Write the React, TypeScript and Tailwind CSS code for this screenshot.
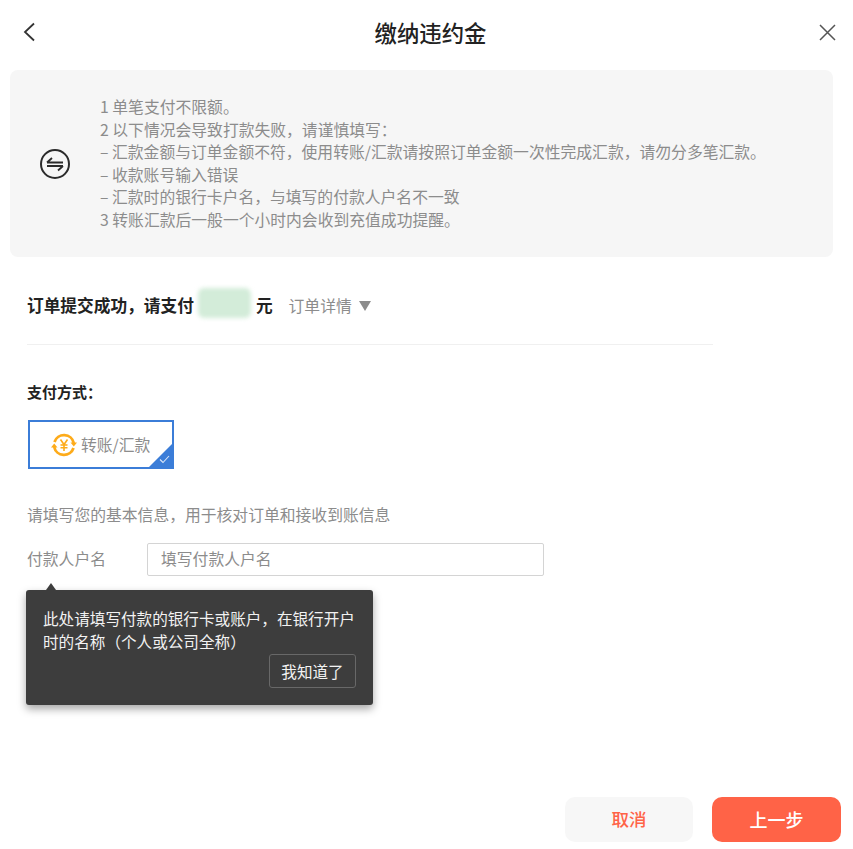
const notes = [
  '1 单笔支付不限额。',
  '2 以下情况会导致打款失败，请谨慎填写：',
  '– 汇款金额与订单金额不符，使用转账/汇款请按照订单金额一次性完成汇款，请勿分多笔汇款。',
  '– 收款账号输入错误',
  '– 汇款时的银行卡户名，与填写的付款人户名不一致',
  '3 转账汇款后一般一个小时内会收到充值成功提醒。',
];

function TransferIcon() {
  return (
    <svg width="32" height="32" viewBox="0 0 32 32" fill="none" stroke="#2b2b2b" strokeWidth="2">
      <circle cx="16" cy="16" r="14" />
      <path d="M8 14.5h16M8 14.5l5-4.5" strokeWidth="1.8" />
      <path d="M24 18H8M24 18l-5 4.5" strokeWidth="1.8" />
    </svg>
  );
}

function YuanIcon() {
  return (
    <svg width="26" height="26" viewBox="0 0 26 26" fill="none" stroke="#fdab1a" strokeWidth="2.8">
      <path d="M3.5 10A10 10 0 0 1 22.800 11" />
      <path d="M22.500 16A10 10 0 0 1 3.200 15" />
      <path d="M19.500 10.500h6.500l-3.200 4z" strokeWidth="0" fill="#fdab1a" />
      <path d="M6.500 15.500H0l3.200-4z" strokeWidth="0" fill="#fdab1a" />
      <path d="M9.500 7.500l3.500 5 3.500-5M13 12.500v6.500M9.500 13h7M9.500 15.800h7" strokeWidth="1.6" />
    </svg>
  );
}

export default function App() {
  return (
    <div
      className="flex h-[849px] flex-col overflow-hidden bg-white text-[15.8px] text-[#8c8c8c]"
      style={{ fontFamily: '"Noto Sans CJK SC", "Noto Sans", sans-serif' }}
    >
      <header className="flex h-[70px] shrink-0 items-center justify-between pb-[6px] pl-[22px] pr-[16px]">
        <svg className="mr-[7px]" width="14" height="20" viewBox="0 0 14 20" fill="none" stroke="#333" strokeWidth="1.8">
          <path d="M12 1.5L3 10l9 8.5" />
        </svg>
        <h1 className="text-[22.4px] font-medium leading-none text-[#222]">缴纳违约金</h1>
        <svg width="19" height="19" viewBox="0 0 19 19" fill="none" stroke="#555" strokeWidth="1.5">
          <path d="M2 2l15 15M17 2L2 17" />
        </svg>
      </header>

      <section className="mx-[10px] flex h-[187px] w-[823px] shrink-0 items-center rounded-[8px] bg-[#f6f6f6] pl-[29px]">
        <div className="mr-[29px] shrink-0">
          <TransferIcon />
        </div>
        <ul className="leading-[22.5px]">
          {notes.map((note) => (
            <li key={note}>{note}</li>
          ))}
        </ul>
      </section>

      <div className="ml-[27px] flex h-[88px] w-[686px] shrink-0 items-center border-b border-[#f0f0f0] pt-[11px]">
        <span className="text-[16.7px] font-bold text-[#222]">订单提交成功，请支付</span>
        <span className="mb-[6px] ml-[4px] mr-[5px] h-[30px] w-[53px] rounded-[6px] bg-[#d3ecd9] blur-[2px]" />
        <span className="text-[16.7px] font-bold text-[#222]">元</span>
        <span className="ml-[16px]">订单详情</span>
        <span className="ml-[7px] h-0 w-0 border-x-[6px] border-t-[10px] border-x-transparent border-t-[#8c8c8c]" />
      </div>

      <div className="ml-[27px] mt-[36px] text-[15px] font-bold leading-[22px] text-[#222]">支付方式：</div>

      <div className="relative ml-[28px] mt-[17px] flex h-[49px] w-[146px] shrink-0 items-center gap-[4px] border-2 border-[#3b7dd8] pl-[21px]">
        <YuanIcon />
        <span>转账/汇款</span>
        <span className="absolute bottom-0 right-0 h-0 w-0 border-b-[23px] border-l-[23px] border-b-[#3b7dd8] border-l-transparent" />
        <svg className="absolute bottom-[3px] right-[2px]" width="11" height="9" viewBox="0 0 11 9" fill="none" stroke="#dbe7f8" strokeWidth="1.1">
          <path d="M1 4.5l3 3 6-6.500" />
        </svg>
      </div>

      <p className="ml-[27px] mt-[34px] leading-[24px]">请填写您的基本信息，用于核对订单和接收到账信息</p>

      <div className="relative ml-[27px] mt-[16px] flex items-center">
        <label className="mb-[2px] w-[120px] shrink-0">付款人户名</label>
        <input
          placeholder="填写付款人户名"
          className="h-[33px] w-[397px] rounded-[2px] border border-[#d4d4d4] pb-[3px] pl-[13px] pr-[13px] outline-none placeholder:text-[#8c8c8c]"
        />
        <div className="absolute left-[-1px] top-[47px] h-[115px] w-[347px] rounded-[3px] bg-[#3d3d3d] pl-[17px] pr-[15px] pt-[17px] text-[15.6px] leading-[23px] text-[#f2f2f2] shadow-[0_4px_8px_rgba(0,0,0,0.35)]">
          <span className="absolute left-[20px] top-[-7px] h-0 w-0 border-x-[5px] border-b-[7px] border-x-transparent border-b-[#3d3d3d]" />
          <p>此处请填写付款的银行卡或账户，在银行开户时的名称（个人或公司全称）</p>
          <div className="mt-[1px] flex justify-end pr-[2px]">
            <button className="h-[34px] w-[87px] rounded-[3px] border border-[#686868] text-[#f2f2f2]">我知道了</button>
          </div>
        </div>
      </div>

      <footer className="mt-auto flex justify-end gap-[19px] pb-[7px] pr-[12px]">
        <button className="h-[45px] w-[128px] rounded-[10px] bg-[#f7f7f7] text-[17.5px] font-medium text-[#ff6347]">取消</button>
        <button className="h-[45px] w-[129px] rounded-[10px] bg-[#ff6347] text-[18px] font-medium text-white">上一步</button>
      </footer>
    </div>
  );
}
